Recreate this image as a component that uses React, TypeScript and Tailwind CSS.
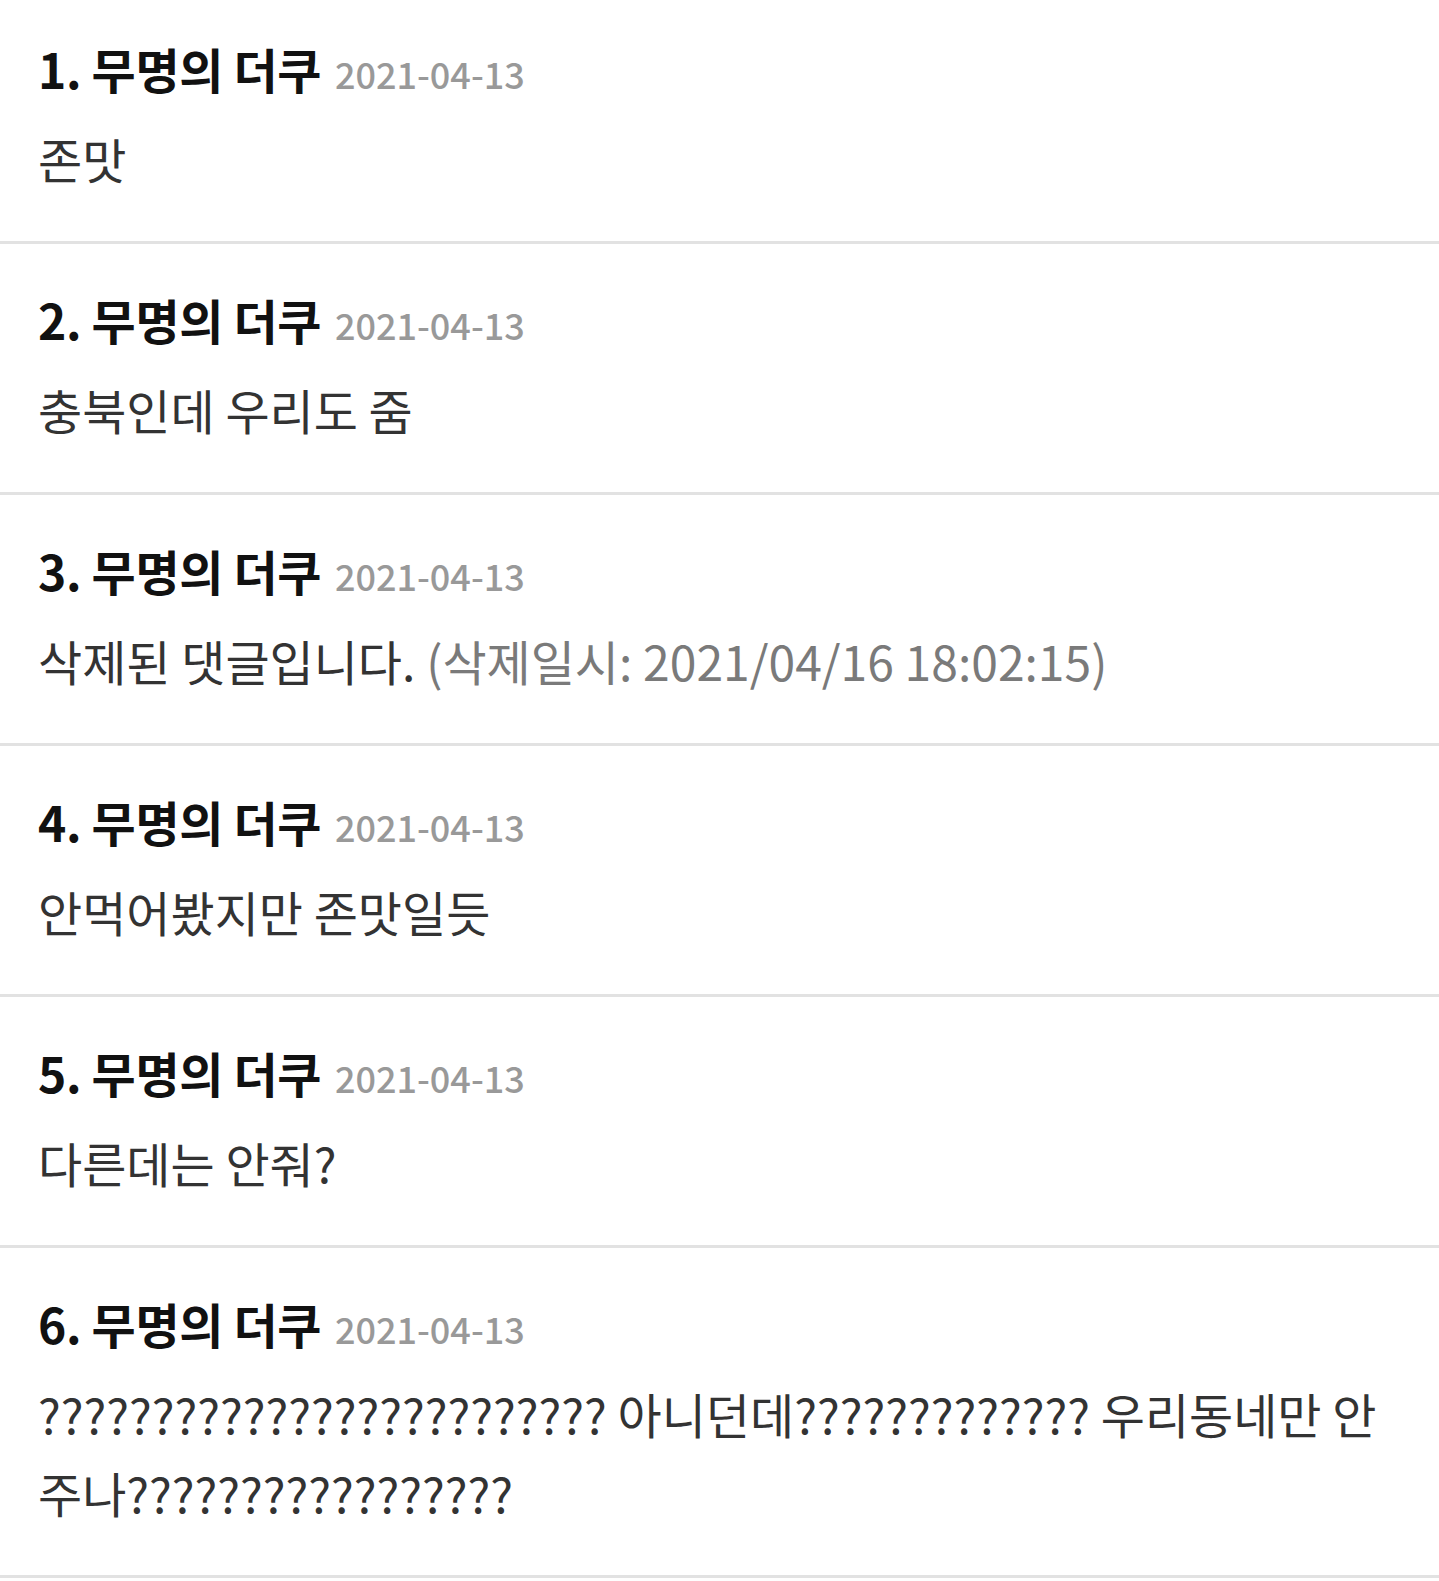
import React from 'react';

type Comment = {
  no: number;
  date: string;
  body: React.ReactNode;
};

const comments: Comment[] = [
  { no: 1, date: '2021-04-13', body: '존맛' },
  { no: 2, date: '2021-04-13', body: '충북인데 우리도 줌' },
  {
    no: 3,
    date: '2021-04-13',
    body: (
      <>
        삭제된 댓글입니다.{' '}
        <span className="text-[#7a7a7a]">(삭제일시: 2021/04/16 18:02:15)</span>
      </>
    ),
  },
  { no: 4, date: '2021-04-13', body: '안먹어봤지만 존맛일듯' },
  { no: 5, date: '2021-04-13', body: '다른데는 안줘?' },
  {
    no: 6,
    date: '2021-04-13',
    body: '????????????????????????? 아니던데????????????? 우리동네만 안 주나?????????????????',
  },
];

const CommentRow = ({ comment, first }: { comment: Comment; first: boolean }) => {
  return (
    <li className={`border-b-[3px] border-[#e2e2e2] px-[38px] pb-[43px] ${first ? 'pt-[38px]' : 'pt-[45px]'}`}>
      <div className="flex items-baseline leading-[60px]">
        <span className="text-[48px] font-bold tracking-[-0.4px] text-[#111]">
          {comment.no}. 무명의 더쿠
        </span>
        <span className="ml-[14px] text-[36px] font-medium text-[#999]">{comment.date}</span>
      </div>
      <p className="mt-[16px] text-[48px] leading-[79px] text-[#333] break-keep">{comment.body}</p>
    </li>
  );
};

export default function App() {
  return (
    <div className="min-h-screen w-[1439px] bg-white font-['Noto_Sans_CJK_KR','Noto_Sans',sans-serif]">
      <ul>
        {comments.map((c, i) => (
          <CommentRow key={c.no} comment={c} first={i === 0} />
        ))}
      </ul>
    </div>
  );
}
